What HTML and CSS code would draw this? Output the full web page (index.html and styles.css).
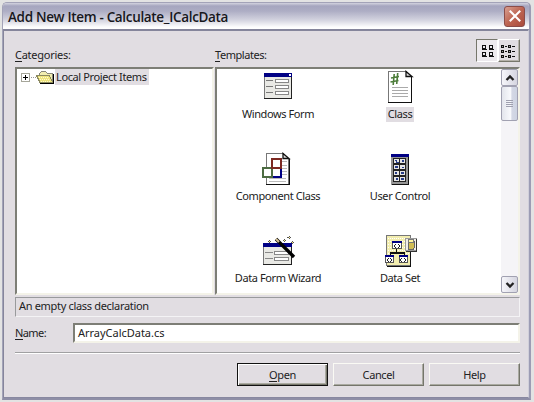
FILE: index.html
```html
<!DOCTYPE html>
<html lang="en">
<head>
<meta charset="utf-8">
<title>Add New Item - Calculate_ICalcData</title>
<link rel="stylesheet" href="styles.css">
</head>
<body>
<main class="window">
  <header class="titlebar">
    <h1 class="title">Add New Item - Calculate_ICalcData</h1>
    <button class="close" aria-label="Close"><svg width="22" height="22" viewBox="0 0 22 22"><path d="M6.500 6.500l9 9M15.500 6.500l-9 9" stroke="#fff" stroke-width="2.1" stroke-linecap="square"/></svg></button>
  </header>
  <div class="client">
    <div class="labels">
      <span class="cat-label"><u>C</u>ategories:</span>
      <span class="tpl-label"><u>T</u>emplates:</span>
      <div class="views">
        <button class="view pressed" aria-label="Large icons"><svg width="20" height="21" viewBox="0 0 20 21" shape-rendering="crispEdges"><g fill="none" stroke="#111"><path d="M5.500 5.500h3v3h-3zM12.500 5.500h3v3h-3zM5.500 12.500h3v3h-3zM12.500 12.500h3v3h-3z"/><path d="M5 9.500h5M12 9.500h5M5 16.500h5M12 16.500h5"/></g></svg></button>
        <button class="view" aria-label="Small icons"><svg width="20" height="20" viewBox="0 0 20 20" shape-rendering="crispEdges"><g fill="#111"><path d="M2 4h3v3H2zM9 4h3v3H9zM2 9h3v3H2zM9 9h3v3H9zM2 14h3v3H2zM9 14h3v3H9z"/><path d="M6 5h2v1H6zM13 5h3v1h-3zM6 10h2v1H6zM13 10h3v1h-3zM6 15h2v1H6zM13 15h3v1h-3z"/></g><path d="M3 5h1v1H3zM10 5h1v1h-1zM3 10h1v1H3zM10 10h1v1h-1zM3 15h1v1H3zM10 15h1v1h-1z" fill="#999"/></svg></button>
      </div>
    </div>
    <div class="panels">
      <section class="sunken tree">
        <div class="node">
          <svg width="36" height="16" viewBox="0 0 36 16" shape-rendering="crispEdges"><path d="M2.500 4.500h8v8h-8z" fill="#fff" stroke="#a6a69a"/><path d="M4 8.500h5M6.500 6v5" stroke="#000"/><path d="M12 8.500h6" stroke="#999" stroke-dasharray="1 1"/><path d="M20.500 12.500v-8l2-2h4l2 2h5v8z" fill="#f1edb0" stroke="#88887c"/><path d="M17.500 6.500h13l3 7H21z" fill="#eee47d" stroke="#8b8960"/><path d="M20 8h10M21 10h10M22 12h10" stroke="#fffbd0" stroke-dasharray="1 1"/><path d="M21 14.500h13.500V5" fill="none" stroke="#000"/></svg>
          <span class="selected node-name">Local Project Items</span>
        </div>
      </section>
      <section class="sunken templates">
        <div class="grid">
          <div class="item">
            <svg width="36" height="36" viewBox="0 0 36 36" shape-rendering="crispEdges"><path d="M4.500 3.500h27v25h-27z" fill="#e9e9e5" stroke="#777"/><path d="M4 3h28v4H4z" fill="#000084"/><path d="M29 4h2v2h-2z" fill="#fff"/><path d="M4 28.500h28M31.500 7v22" stroke="#222"/><path d="M6 10.500h7M6 16.500h7M6 22.500h7" stroke="#777"/><path d="M15.500 9.500h13v3h-13zM15.500 15.500h13v3h-13zM15.500 21.500h13v3h-13z" fill="#fff" stroke="#888"/></svg>
            <span>Windows Form</span>
          </div>
          <div class="item">
            <svg width="36" height="36" viewBox="0 0 36 36"><g shape-rendering="crispEdges"><path d="M6.500 1.500h18l5 5v26h-23z" fill="#fff" stroke="#777"/><path d="M6 32.500h24M29.500 7v26" stroke="#111"/><path d="M10 17.500h16M10 20.500h16M10 23.500h16M10 26.500h16" stroke="#aaa"/></g><path d="M24 1.500v5h6z" fill="#ddd" stroke="#111" stroke-width="1.300"/><path d="M12.200 4l-1 11M15.700 3l-1 11M9 8l8-1.500M8.500 12l8-1.500" stroke="#4d7d3b" stroke-width="1.600"/></svg>
            <span class="selected">Class</span>
          </div>
          <div class="item">
            <svg width="36" height="36" viewBox="0 0 36 36"><g shape-rendering="crispEdges"><path d="M6.500 1.500h17l5 5v26h-22z" fill="#fff" stroke="#777"/><path d="M6 32.500h24M29 7v26" stroke="#111"/><path d="M22 9.500h5M22 13.500h5M22 16.500h5M22 19.500h5M22 22.500h5M9 26.500h17M9 29.500h17" stroke="#bbb"/><path d="M12 16h9v9h-9z" fill="#fff" stroke="#000084" stroke-width="2"/><path d="M3 16h9v9H3z" fill="#fff" stroke="#4d6c42" stroke-width="2"/><path d="M12 7h9v9h-9z" fill="#fff" stroke="#7c2922" stroke-width="2"/></g><path d="M23 1.500v5h6z" fill="#ddd" stroke="#111" stroke-width="1.300"/></svg>
            <span>Component Class</span>
          </div>
          <div class="item">
            <svg width="36" height="36" viewBox="0 0 36 36" shape-rendering="crispEdges"><path d="M9 2h18v31H9z" fill="#959595"/><path d="M9 2h18v3H9z" fill="#000084"/><path d="M26.500 5v27.500H10" stroke="#111" fill="none"/><path d="M11 6h13v24H11z" fill="#222"/><path d="M12 7h5v4h-5zM18 7h5v4h-5zM12 13h5v4h-5zM18 13h5v4h-5zM12 19h5v4h-5zM18 19h5v4h-5zM12 25h5v4h-5zM18 25h5v4h-5z" fill="#e6e6e6"/><path d="M13 8h2v2h2v1h-3V9h-1zM20 8h2v2h-2zM13 14h3v2h-3zM20 15h2v1h-2zM13 20h2v2h-2zM19 20h3v2h-3zM14 26h2v2h-2zM19 26h3v2h-3z" fill="#263c88"/></svg>
            <span>User Control</span>
          </div>
          <div class="item">
            <svg width="36" height="36" viewBox="0 0 36 36"><g shape-rendering="crispEdges"><path d="M3.500 9.500h28v21h-28z" fill="#e9e9e5" stroke="#777"/><path d="M3 9h29v4H3z" fill="#000084"/><path d="M3 30.500h29M31.500 13v18" stroke="#222"/><path d="M5 18.500h8M5 24.500h8" stroke="#888"/><path d="M14.500 17.500h14v3h-14zM14.500 23.500h14v3h-14z" fill="#fff" stroke="#888"/><path d="M8 7.500h3M9.500 6v3M23 6.500h3M24.500 5v3M27 3.500h4M29.500 2v3M31 8.500h3M32.500 7v3" stroke="#555"/><path d="M9 7h1v1h-1zM24 6h1v1h-1zM29 3h1v1h-1zM32 8h1v1h-1z" fill="#ffe98a"/></g><path d="M16 5l18 18" stroke="#000" stroke-width="3.300"/><path d="M16 5l3 3" stroke="#d7c398" stroke-width="2"/></svg>
            <span>Data Form Wizard</span>
          </div>
          <div class="item">
            <svg width="36" height="36" viewBox="0 0 36 36" shape-rendering="crispEdges"><path d="M4.500 1.500h24v30h-24z" fill="#f2edaf" stroke="#777"/><path d="M6 4h21M6 7h21M6 10h21M6 13h21M6 16h21M6 19h21" stroke="#fff" stroke-dasharray="1 1"/><path d="M5 32.500h24M28.500 18v14" stroke="#111"/><path d="M14.500 14v5M8.500 22v-3h14v3" stroke="#111" stroke-width="1.500" fill="none"/><path d="M10.500 8.500h9v6h-9zM3.500 22.500h8v6h-8zM17.500 22.500h8v6h-8z" fill="#fff" stroke="#555"/><path d="M10 7h10v2H10zM3 21h9v2H3zM17 21h9v2h-9z" fill="#000084"/><path d="M14 10l-2 2 2 2M16 10l2 2-2 2M7 24l-2 2 2 2M8 24l2 2-2 2M20 24l-2 2 2 2M22 24l2 2-2 2" stroke="#222" fill="none"/><path d="M23.500 4.500h11v12h-11z" fill="#f1eee7" stroke="#999"/><path d="M34.500 5v12H24" stroke="#333" fill="none"/><path d="M26 7c0-2 6-2 6 0v7c0 2-6 2-6 0z" fill="#d1bd53" stroke="#666"/><ellipse cx="29" cy="7" rx="3" ry="1.500" fill="#fff6a0" stroke="#777"/></svg>
            <span>Data Set</span>
          </div>
        </div>
        <div class="scrollbar">
          <div class="sb-btn"><svg width="14" height="14" viewBox="0 0 14 14"><path d="M3.500 9L7 5.500 10.500 9" fill="none" stroke="#222" stroke-width="2.300"/></svg></div>
          <div class="thumb"><i></i><i></i><i></i><i></i></div>
          <div class="track"></div>
          <div class="sb-btn"><svg width="14" height="14" viewBox="0 0 14 14"><path d="M3.500 5L7 8.500 10.500 5" fill="none" stroke="#222" stroke-width="2.300"/></svg></div>
        </div>
      </section>
    </div>
    <div class="description">An empty class declaration</div>
    <div class="name-row"><label><u>N</u>ame:</label><div class="sunken field">ArrayCalcData.cs</div></div>
    <hr class="divider">
    <footer class="actions">
      <button class="btn default"><span><u>O</u>pen</span></button>
      <button class="btn">Cancel</button>
      <button class="btn">Help</button>
    </footer>
  </div>
</main>
</body>
</html>
```
FILE: styles.css
```css
* { box-sizing: border-box; }
body {
  margin: 0;
  width: 534px;
  height: 402px;
  padding: 2px 3px 2px 2px;
  background: #e3e3e3;
  overflow: hidden;
  font: 11px/14px "Noto Sans", "Liberation Sans", sans-serif;
  letter-spacing: -0.4px;
  color: #222;
}
svg { display: block; flex: none; }
button { font: inherit; letter-spacing: inherit; color: inherit; padding: 0; margin: 0; border: 0; }
u { text-decoration: none; box-shadow: 0 -1px 0 #222 inset; }

.window {
  height: 398px;
  border: 1px solid #a3a3b8;
  border-right: 2px solid #9c9cb4;
  border-bottom: 2px solid #8e8ea6;
  border-radius: 5px 5px 0 0;
  background: #e1dde2;
  overflow: hidden;
}
.titlebar {
  height: 26px;
  display: flex;
  align-items: center;
  justify-content: space-between;
  padding: 0 4px 0 5px;
  background: linear-gradient(#d3d3df 0, #a6a6bf 3px, #adadc4 8px, #d3d3df 17px, #fdfdfd 24px, #fff);
}
.title {
  margin: 2px 0 0;
  font: 600 13.500px/20px "Open Sans", "Noto Sans", sans-serif;
  letter-spacing: -0.330px;
  color: #17171c;
}
.close {
  width: 21px;
  height: 21px;
  border: 1px solid #8b4d49;
  border-radius: 3px;
  background: linear-gradient(135deg, #d9a092, #bd6552 50%, #a94b3b);
  display: flex;
  align-items: center;
  justify-content: center;
}
.client {
  height: 369px;
  border: 1px solid #85859b;
  border-top: 2px solid #85859b;
  border-bottom-color: #8888a0;
  border-right-color: #d0cfda;
  padding: 7px 8px 0 11px;
}
.labels { height: 29px; display: flex; align-items: flex-start; }
.cat-label { width: 200px; padding-top: 10px; letter-spacing: -0.25px; }
.tpl-label { flex: 1; padding-top: 10px; letter-spacing: -0.45px; }
.views { display: flex; margin-top: 1px; }
.view {
  width: 22px;
  height: 23px;
  background: #e1dde2;
  border: 1px solid;
  border-color: #fff #77776c #77776c #fff;
  box-shadow: -1px -1px 0 #b5b2aa inset;
  display: flex;
  align-items: center;
  justify-content: center;
  overflow: hidden;
}
.view.pressed { background: #edeaee; border-color: #77776c #fff #fff #77776c; box-shadow: none; }

.sunken {
  background: #fff;
  border: 2px solid;
  border-color: #7d7e76 #f4f3e9 #f4f3e9 #7d7e76;
}
.panels { display: flex; gap: 1px; height: 228px; }
.tree { width: 199px; }
.templates { flex: 1; display: flex; }
.node { display: flex; align-items: center; height: 16px; padding-left: 2px; }
.selected { background: #e1dde2; }
.node-name { height: 16px; line-height: 15px; padding: 0 2px 0 1px; letter-spacing: -0.38px; }
.grid {
  flex: 1;
  display: grid;
  grid-template-columns: 122px 122px;
  grid-auto-rows: 82px;
  padding-top: 1px;
}
.item { display: flex; flex-direction: column; align-items: center; }
.item span { height: 15px; line-height: 14px; padding: 0 2px; white-space: nowrap; margin-top: 1px; }

.scrollbar { width: 17px; display: flex; flex-direction: column; background: #f5f4f7; }
.sb-btn, .thumb {
  border: 1px solid #a1a1b1;
  border-radius: 2px;
  background: linear-gradient(90deg, #f6f6fa, #d5d5e0);
}
.sb-btn { height: 17px; display: flex; align-items: center; justify-content: center; }
.thumb {
  height: 35px;
  background: linear-gradient(90deg, #e3e5ec, #f9fafd 60%, #d4d8e5 65%, #cdd3e2);
  display: flex;
  flex-direction: column;
  align-items: center;
  justify-content: center;
  gap: 1px;
}
.thumb i { width: 7px; height: 1px; background: #9fa0af; }
.track { flex: 1; }

.description {
  height: 20px;
  margin-top: 2px;
  padding: 0 3px;
  line-height: 15px;
  letter-spacing: -0.32px;
  border: 1px solid;
  border-color: #999a9c #f4f3f5 #f4f3f5 #999a9c;
}
.name-row { display: flex; height: 20px; margin-top: 6px; }
.name-row label { width: 58px; padding-top: 3px; letter-spacing: -0.6px; }
.field { flex: 1; padding: 1px 3px; letter-spacing: -0.02px; }
.divider { margin: 9px 0 0; height: 2px; border: 0; border-top: 1px solid #a0a0a2; background: #fff; }
.actions { display: flex; justify-content: flex-end; gap: 5px; margin-top: 9px; }
.btn {
  width: 91px;
  height: 23px;
  background: #e1dde2;
  border: 1px solid;
  border-color: #fafaf4 #74756b #74756b #fafaf4;
  box-shadow: -1px -1px 0 #aaaaa1 inset;
}
.btn.default { border-color: #111; box-shadow: 1px 1px 0 #fff inset, -1px -1px 0 #77776c inset, -2px -2px 0 #aaaaa1 inset; }
```
